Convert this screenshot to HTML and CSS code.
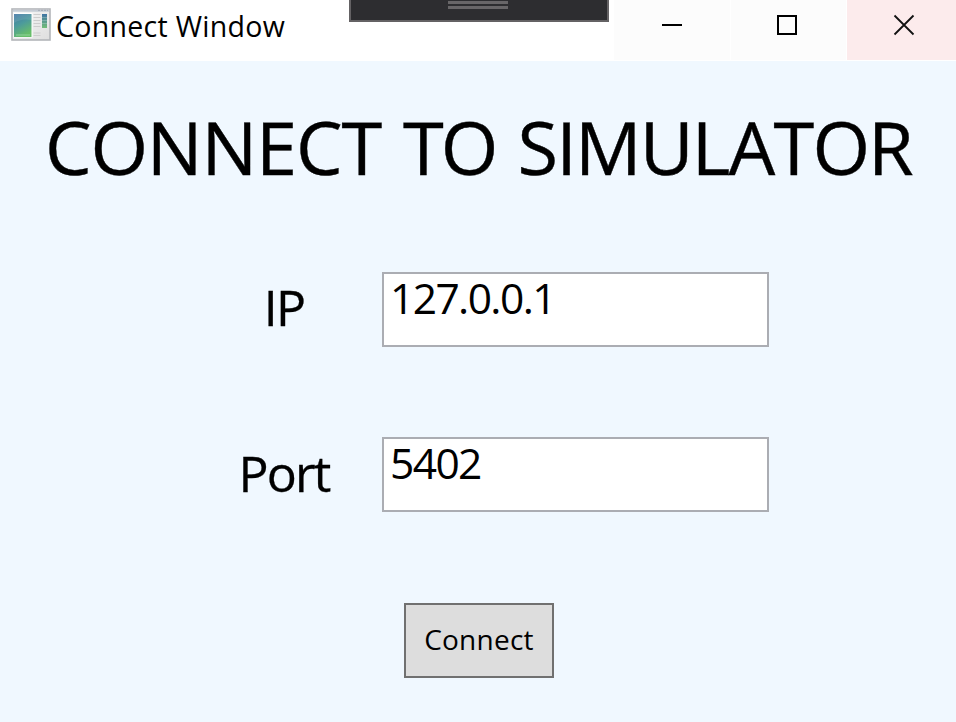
FILE: index.html
```html
<!DOCTYPE html>
<html lang="en">
<head>
<meta charset="utf-8">
<title>Connect Window</title>
<link rel="stylesheet" href="styles.css">
</head>
<body>
<div class="window">
  <header class="titlebar">
    <svg class="app-icon" width="40" height="33" viewBox="0 0 40 33">
      <defs>
        <linearGradient id="pane" x1="0" y1="0" x2="0.4" y2="1">
          <stop offset="0" stop-color="#4377a6"/><stop offset="0.5" stop-color="#4c9a9c"/><stop offset="1" stop-color="#68bd6a"/>
        </linearGradient>
        <linearGradient id="strip" x1="0" y1="0" x2="0" y2="1">
          <stop offset="0" stop-color="#3f74a5"/><stop offset="1" stop-color="#72bd78"/>
        </linearGradient>
        <linearGradient id="frame" x1="0" y1="0" x2="1" y2="1">
          <stop offset="0" stop-color="#fafafa"/><stop offset="1" stop-color="#dedede"/>
        </linearGradient>
      </defs>
      <rect x="1" y="1" width="38" height="31" fill="url(#frame)" stroke="#b3b6ba" stroke-width="1.6"/>
      <path d="M2 2.7h36" stroke="#c5ccd5" stroke-width="2"/>
      <path d="M27 2.3h10" stroke="#a3abb5" stroke-dasharray="2 1"/>
      <rect x="2.5" y="5" width="19" height="24.500" fill="#fff"/>
      <rect x="3" y="6" width="17.500" height="23" fill="url(#pane)"/>
      <path d="M3 15q7-5 17.500-3v-6h-17.500z" fill="#fff" opacity=".1"/>
      <path d="M5 27h14" stroke="#a5dfaf" stroke-width=".7"/>
      <path d="M22.500 6.500h7M22.500 9.500h7M22.500 12.500h7M22.500 15.500h7M22.500 18.500h7M22.500 25h7M22.500 27.500h7" stroke="#cdcdcd"/>
      <rect x="31" y="6" width="5" height="14" fill="url(#strip)"/>
      <path d="M31 9.500h5M31 12.500h5M31 15.500h5" stroke="#d7e9e6" stroke-width=".3"/>
    </svg>
    <span class="caption">Connect Window</span>
    <div class="debug-bar"><i></i><i></i></div>
    <div class="controls">
      <div class="control minimize"><svg width="22" height="22" viewBox="0 0 22 22"><path d="M1 11h20" stroke="#000" stroke-width="2"/></svg></div>
      <div class="control maximize"><svg width="22" height="22" viewBox="0 0 22 22"><rect x="2" y="2" width="18" height="18" fill="none" stroke="#000" stroke-width="2"/></svg></div>
      <div class="control close"><svg width="22" height="22" viewBox="0 0 22 22"><path d="M1.500 1.500l19 19M20.500 1.500l-19 19" stroke="#111" stroke-width="1.800"/></svg></div>
    </div>
  </header>
  <main class="content">
    <h1 class="heading"><span class="word-connect">CONNECT</span> <span class="word-to">TO</span> <span class="word-simulator">SIMULATOR</span></h1>
    <div class="field field-ip">
      <label class="label" for="ip">IP</label>
      <div class="textbox" id="ip">127.0.0.1</div>
    </div>
    <div class="field field-port">
      <label class="label" for="port">Port</label>
      <div class="textbox" id="port">5402</div>
    </div>
    <button class="connect">Connect</button>
  </main>
</div>
</body>
</html>
```
FILE: styles.css
```css
* { box-sizing: border-box; }
body {
  margin: 0;
  font-family: "Open Sans", "Noto Sans", sans-serif;
  color: #000;
}
.window {
  height: 722px;
  overflow: hidden;
  background: #f0f8ff;
}
.titlebar {
  position: relative;
  display: flex;
  height: 61px;
  background: #fff;
}
.app-icon { margin: 8px 0 0 11px; }
.caption {
  margin-left: 5px;
  font-size: 28.5px;
  line-height: 52px;
  letter-spacing: 0.3px;
  white-space: nowrap;
}
.debug-bar {
  position: absolute;
  left: 349px;
  top: 0;
  width: 260px;
  height: 22px;
  border: 2px solid #646264;
  border-top: 0;
  background: #2d2d30;
  display: flex;
  flex-direction: column;
  align-items: center;
  gap: 2px;
  padding: 1px 2px 0 0;
}
.debug-bar i {
  width: 60px;
  height: 3px;
  background: #686668;
}
.controls {
  display: flex;
  gap: 1px;
  margin-left: auto;
  height: 60px;
}
.control {
  padding-top: 14px;
  background: #fcfcfc;
}
.control svg { display: block; }
.minimize { width: 116px; padding-left: 47px; }
.maximize { width: 115px; padding-left: 45px; }
.close {
  width: 109px;
  padding-left: 46px;
  background: #fcebec;
}
.content {
  display: flex;
  flex-direction: column;
  align-items: center;
  height: 661px;
}
.heading {
  align-self: flex-start;
  margin: 36px 0 0 45px;
  font-size: 74px;
  line-height: 100px;
  font-weight: 400;
  word-spacing: 2.8px;
  white-space: nowrap;
  -webkit-text-stroke: 0.4px #000;
}
.word-connect { letter-spacing: -1.15px; }
.word-to { letter-spacing: -3px; }
.word-simulator { letter-spacing: -1.85px; }
.field {
  align-self: flex-start;
  display: flex;
  height: 75px;
  margin-left: 190px;
}
.field-ip { margin-top: 75px; }
.field-port { margin-top: 90px; }
.label {
  width: 192px;
  padding-right: 4px;
  font-size: 50px;
  line-height: 70px;
  letter-spacing: -1.8px;
  text-align: center;
  -webkit-text-stroke: 0.3px #000;
}
.field-port .label { line-height: 72px; }
.textbox {
  width: 387px;
  border: 2px solid #abadb3;
  padding-left: 6px;
  background: #fff;
  font-size: 42.5px;
  line-height: 48px;
  letter-spacing: -1.6px;
}
.connect {
  width: 150px;
  height: 75px;
  margin: 91px 0 0 2px;
  padding: 0 0 3px;
  border: 2px solid #707070;
  background: #ddd;
  color: #000;
  font: 28px "Open Sans", "Noto Sans", sans-serif;
  letter-spacing: 0.25px;
}
```
